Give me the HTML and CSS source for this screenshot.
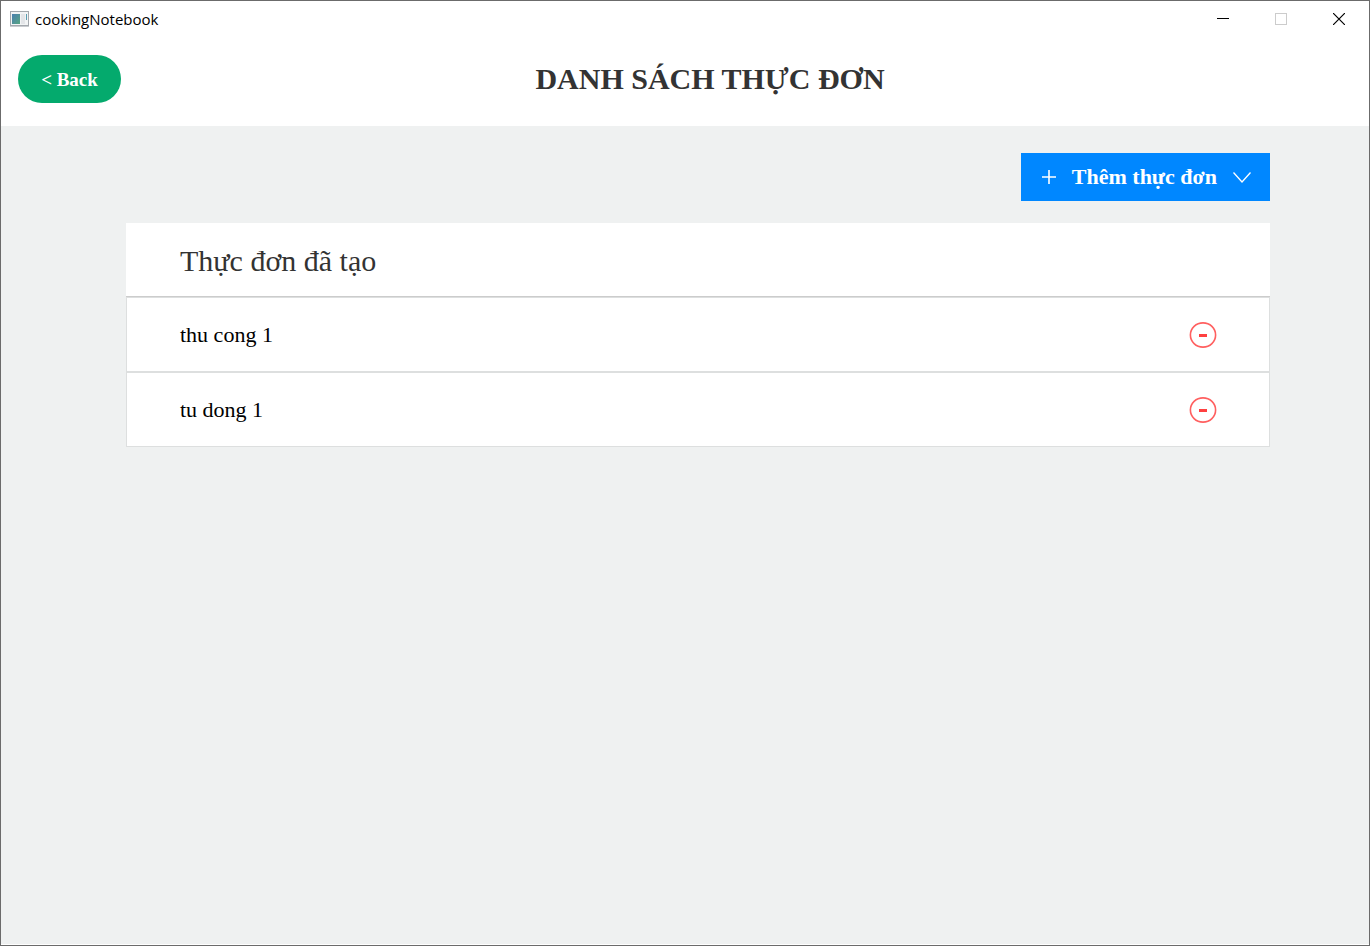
FILE: index.html
```html
<!DOCTYPE html>
<html lang="vi">
<head>
<meta charset="utf-8">
<title>cookingNotebook</title>
<link rel="stylesheet" href="styles.css">
</head>
<body>
<div class="window">
  <div class="titlebar">
    <svg class="app-icon" width="19" height="16" viewBox="0 0 19 16" aria-hidden="true">
      <defs>
        <linearGradient id="pane" x1="0" y1="0" x2="1" y2="1">
          <stop offset="0" stop-color="#4a7fb0"/>
          <stop offset="1" stop-color="#57a582"/>
        </linearGradient>
      </defs>
      <rect x="0.5" y="0.5" width="18" height="14" fill="#f2f4f5" stroke="#a3a8ad"/>
      <path d="M0 15.500H19" stroke="#c9ccd0"/>
      <rect x="2" y="3" width="8" height="10" fill="url(#pane)"/>
      <rect x="11" y="3" width="4" height="10" fill="#e3e5e8"/>
      <rect x="16" y="3" width="1" height="6" fill="#5a9db0"/>
    </svg>
    <span class="app-name">cookingNotebook</span>
    <button class="win-btn" type="button" aria-label="Minimize">
      <svg width="12" height="12" viewBox="0 0 12 12"><path d="M0 5.500H12" stroke="#000"/></svg>
    </button>
    <button class="win-btn" type="button" aria-label="Maximize" disabled>
      <svg width="12" height="12" viewBox="0 0 12 12"><rect x="0.5" y="0.5" width="11" height="11" fill="none" stroke="#ccc"/></svg>
    </button>
    <button class="win-btn" type="button" aria-label="Close">
      <svg width="12" height="12" viewBox="0 0 12 12"><path d="M0 0L12 12M12 0L0 12" stroke="#000" stroke-width="1.2"/></svg>
    </button>
  </div>
  <header class="header">
    <button class="back" type="button">&lt; Back</button>
    <h1 class="title">DANH SÁCH THỰC ĐƠN</h1>
  </header>
  <main class="content">
    <button class="add" type="button">
      <svg width="14" height="14" viewBox="0 0 14 14" aria-hidden="true"><path d="M7 0V14M0 7H14" stroke="#fff" stroke-width="1.600"/></svg>
      <span class="add-label">Thêm thực đơn</span>
      <svg width="18" height="11" viewBox="0 0 18 11" aria-hidden="true"><path d="M0.500 0.500L9 10L17.500 0.500" fill="none" stroke="#fff" stroke-width="1.300"/></svg>
    </button>
    <section class="menus">
      <h2 class="menus-title">Thực đơn đã tạo</h2>
      <ul class="list">
        <li class="row">
          <span>thu cong 1</span>
          <button class="remove" type="button" aria-label="Xóa thu cong 1">
            <svg width="28" height="28" viewBox="0 0 28 28"><ellipse cx="14" cy="14" rx="12.600" ry="12.100" fill="none" stroke="#ff5f5f" stroke-width="1.600"/><rect x="10" y="13" width="8" height="3" fill="#ff4040"/></svg>
          </button>
        </li>
        <li class="row">
          <span>tu dong 1</span>
          <button class="remove" type="button" aria-label="Xóa tu dong 1">
            <svg width="28" height="28" viewBox="0 0 28 28"><ellipse cx="14" cy="14" rx="12.600" ry="12.100" fill="none" stroke="#ff5f5f" stroke-width="1.600"/><rect x="10" y="13" width="8" height="3" fill="#ff4040"/></svg>
          </button>
        </li>
      </ul>
    </section>
  </main>
</div>
</body>
</html>
```
FILE: styles.css
```css
* {
  box-sizing: border-box;
}

body {
  margin: 0;
  font-family: "Liberation Serif", "Times New Roman", serif;
  color: #000;
}

button {
  margin: 0;
  padding: 0;
  border: 0;
  background: none;
  font-family: inherit;
}

svg {
  display: block;
  flex: none;
}

.window {
  display: flex;
  flex-direction: column;
  min-height: 100vh;
  border: 1px solid #6b6b6b;
  background: #fff;
}

.titlebar {
  display: flex;
  align-items: center;
  height: 36px;
  padding: 0 1px 0 9px;
}

.app-name {
  flex: 1;
  padding-left: 6px;
  font: 15px/20px "Open Sans", "Noto Sans", sans-serif;
}

.win-btn {
  display: flex;
  align-items: center;
  justify-content: center;
  width: 58px;
  height: 36px;
}

.header {
  display: flex;
  align-items: center;
  padding: 18px 70px 23px 17px;
}

.back {
  width: 103px;
  height: 48px;
  padding-top: 2px;
  border-radius: 24px;
  background: #04aa6d;
  color: #fff;
  font-size: 19px;
  font-weight: 700;
}

.title {
  flex: 1;
  margin: 0;
  color: #333;
  font-size: 30px;
  line-height: 36px;
  text-align: center;
}

.content {
  display: flex;
  flex: 1;
  flex-direction: column;
  gap: 22px;
  padding: 27px 99px 27px 125px;
  border-bottom: 1px solid #fff;
  background: #eff1f1;
}

.add {
  display: flex;
  align-items: center;
  align-self: flex-end;
  gap: 16px;
  height: 48px;
  padding: 0 19px 0 21px;
  background: #0087ff;
  color: #fff;
}

.add-label {
  font-size: 22px;
  font-weight: 700;
  line-height: 28px;
}

.menus-title {
  margin: 0;
  padding: 21px 54px 18px;
  border-bottom: 1px solid #ccc;
  background: #fff;
  color: #333;
  font-size: 30px;
  font-weight: 400;
  line-height: 34px;
}

.list {
  display: flex;
  flex-direction: column;
  margin: 0;
  padding: 0;
  list-style: none;
}

.row {
  display: flex;
  align-items: center;
  justify-content: space-between;
  height: 75px;
  padding: 0 52px 0 53px;
  border: 1px solid #dddfdf;
  background: #fff;
  font-size: 22px;
}

.remove {
  border-radius: 50%;
}
```
